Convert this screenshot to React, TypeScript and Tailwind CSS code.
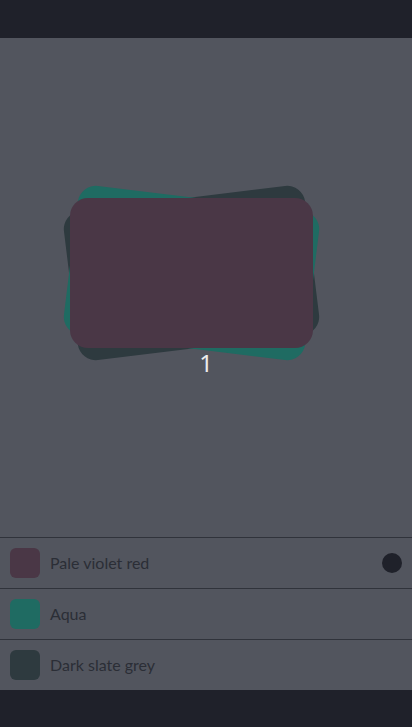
const swatches = [
  { name: 'Pale violet red', color: 'bg-[#4a3746]', selected: true },
  { name: 'Aqua', color: 'bg-[#1f6b62]', selected: false },
  { name: 'Dark slate grey', color: 'bg-[#2e3a3f]', selected: false },
];

const App = () => {
  return (
    <div className="flex h-[727px] w-[412px] flex-col overflow-hidden bg-[#52555e] font-['Noto_Sans',sans-serif]">
      {/* Top bar */}
      <header className="h-[38px] shrink-0 bg-[#1f212a]" />

      {/* Card stack */}
      <main className="flex-1 pt-[160px]">
        <div className="relative ml-[70px] h-[150px] w-[243px]">
          <div className="absolute inset-0 -rotate-[7deg] rounded-[18px] bg-[#2e3a3f]" />
          <div className="absolute inset-0 rotate-[7deg] rounded-[18px] bg-[#1f6b62]" />
          <div className="absolute inset-0 rounded-[18px] bg-[#4a3746]" />
        </div>
        <p className="relative mt-[2px] text-center text-[24px] leading-[26px] text-[#ececec]">1</p>
      </main>

      {/* Colour list */}
      <ul className="shrink-0 font-['Lato',sans-serif]">
        {swatches.map((s) => (
          <li
            key={s.name}
            className="flex h-[51px] items-center border-t border-[#30333b] pl-[10px] pr-[10px]"
          >
            <div className={`h-[30px] w-[30px] rounded-[6px] ${s.color}`} />
            <span className="ml-[10px] flex-1 text-[16px] text-[#2b2e36]">{s.name}</span>
            {s.selected && <div className="h-[20px] w-[20px] rounded-full bg-[#1f212a]" />}
          </li>
        ))}
      </ul>

      {/* Bottom bar */}
      <footer className="h-[37px] shrink-0 bg-[#1f212a]" />
    </div>
  );
};

export default App;
